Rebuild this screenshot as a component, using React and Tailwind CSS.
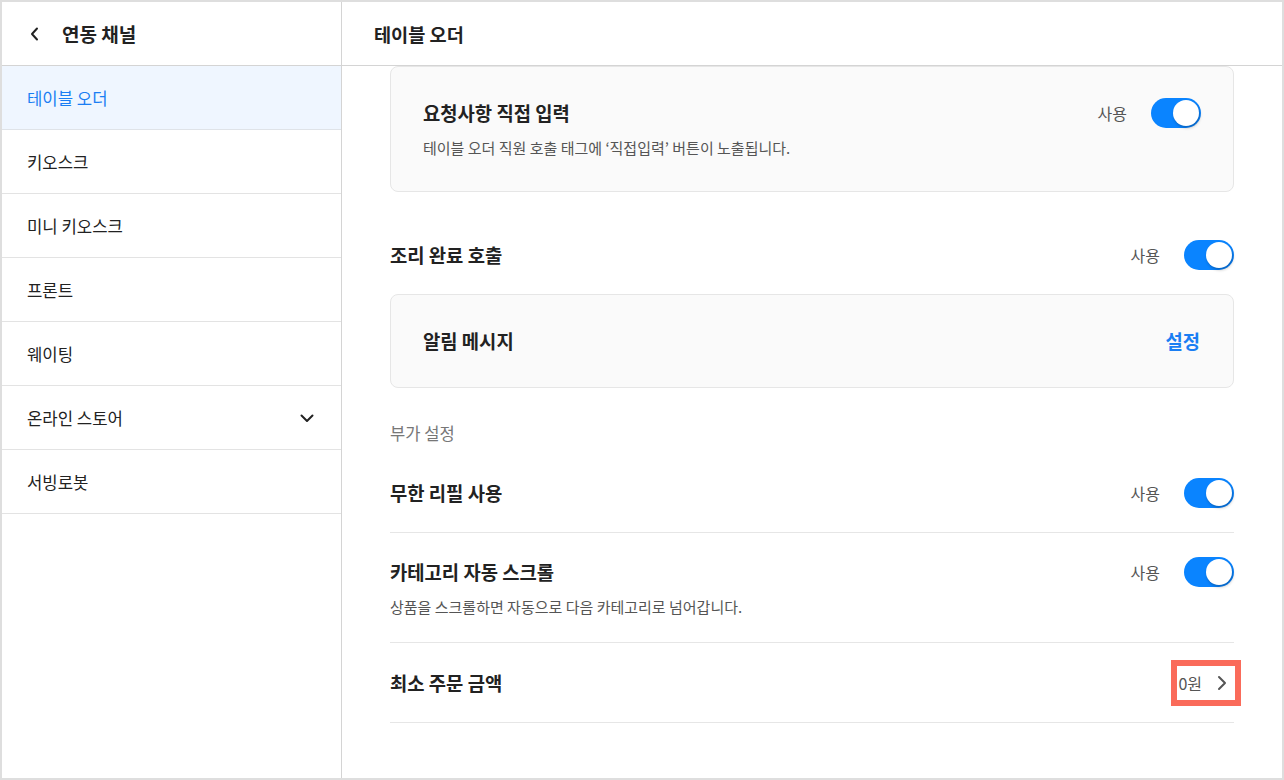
import React from "react";

function Toggle() {
  return (
    <div className="relative w-[50px] h-[30px] rounded-full bg-[#0a84ff] shrink-0">
      <div className="absolute top-[2px] right-[2px] w-[26px] h-[26px] rounded-full bg-white shadow-[1px_2px_3px_rgba(0,0,0,0.25)]" />
    </div>
  );
}

function UseToggle() {
  return (
    <div className="flex items-center gap-6">
      <span className="text-[16px] leading-[24px] text-[#555]">사용</span>
      <Toggle />
    </div>
  );
}

const menu = ["테이블 오더", "키오스크", "미니 키오스크", "프론트", "웨이팅", "온라인 스토어", "서빙로봇"];

export default function App() {
  return (
    <div className="w-[1284px] h-[780px] border-2 border-[#dedede] flex bg-white overflow-hidden font-['Noto_Sans_CJK_KR','Noto_Sans',sans-serif] text-[#222]">
      <aside className="w-[340px] shrink-0 border-r border-[#d4d4d4] flex flex-col">
        <div className="h-[64px] shrink-0 border-b border-[#d4d4d4] flex items-center pl-[28px]">
          <svg width="10" height="14" viewBox="0 0 10 14" fill="none">
            <path d="M7 1.5L2 7l5 5.5" stroke="#222" strokeWidth="2" strokeLinecap="round" strokeLinejoin="round" />
          </svg>
          <span className="ml-[22px] text-[19px] leading-[26px] font-bold">연동 채널</span>
        </div>
        {menu.map((m, i) => (
          <div
            key={m}
            className={
              i === 0
                ? "h-[64px] shrink-0 border-b border-[#dfe3e8] bg-[#eff6ff] flex items-center px-[25px] text-[16.7px] text-[#1a7ef3]"
                : "h-[64px] shrink-0 border-b border-[#e3e3e3] flex items-center justify-between px-[25px] text-[16.7px] text-[#222]"
            }
          >
            <span className="leading-[24px]">{m}</span>
            {m === "온라인 스토어" && (
              <svg width="14" height="10" viewBox="0 0 14 10" fill="none" className="mr-[2px]">
                <path d="M1.5 2.5L7 8l5.5-5.5" stroke="#222" strokeWidth="2" strokeLinecap="round" strokeLinejoin="round" />
              </svg>
            )}
          </div>
        ))}
      </aside>
      <main className="flex-1 min-w-0 flex flex-col">
        <div className="h-[64px] shrink-0 border-b border-[#d4d4d4] flex items-center px-8">
          <span className="text-[18.6px] leading-[26px] font-bold">테이블 오더</span>
        </div>
        <div className="flex-1 overflow-hidden px-12">
          <div className="rounded-lg border border-[#e6e6e6] bg-[#fafafa] px-8 pt-[31px] pb-[33px]">
            <div className="flex items-center justify-between h-[30px]">
              <span className="text-[18.8px] leading-[26px] font-semibold">요청사항 직접 입력</span>
              <UseToggle />
            </div>
            <p className="mt-[10px] text-[15px] leading-[20px] text-[#555]">
              테이블 오더 직원 호출 태그에 ‘직접입력’ 버튼이 노출됩니다.
            </p>
          </div>

          <div className="mt-12 flex items-center justify-between h-[30px]">
            <span className="text-[18.8px] leading-[26px] font-semibold">조리 완료 호출</span>
            <UseToggle />
          </div>

          <div className="mt-6 h-[94px] rounded-lg border border-[#e6e6e6] bg-[#fafafa] pl-8 pr-[33px] flex items-center justify-between">
            <span className="text-[18.8px] leading-[26px] font-semibold">알림 메시지</span>
            <span className="text-[18.8px] leading-[26px] font-semibold text-[#1a7ef3]">설정</span>
          </div>

          <div className="mt-[33px] text-[16.6px] leading-[24px] text-[#777]">부가 설정</div>

          <div className="mt-[9px] py-6 border-b border-[#e6e6e6]">
            <div className="flex items-center justify-between h-[30px]">
              <span className="text-[18.8px] leading-[26px] font-semibold">무한 리필 사용</span>
              <UseToggle />
            </div>
          </div>

          <div className="pt-6 pb-[25px] border-b border-[#e6e6e6]">
            <div className="flex items-center justify-between h-[30px]">
              <span className="text-[18.8px] leading-[26px] font-semibold">카테고리 자동 스크롤</span>
              <UseToggle />
            </div>
            <p className="mt-[10px] text-[15px] leading-[20px] text-[#555]">
              상품을 스크롤하면 자동으로 다음 카테고리로 넘어갑니다.
            </p>
          </div>

          <div className="pt-[25px] pb-6 border-b border-[#e6e6e6]">
            <div className="flex items-center justify-between h-[30px]">
              <span className="text-[18.8px] leading-[26px] font-semibold">최소 주문 금액</span>
              <div className="relative flex items-center h-[30px]">
                <span className="text-[16px] leading-[24px] text-[#555]">0원</span>
                <svg width="20" height="20" viewBox="0 0 20 20" fill="none" className="ml-3">
                  <path d="M5 4l6 6-6 6" stroke="#555" strokeWidth="2" strokeLinecap="round" strokeLinejoin="round" />
                </svg>
                <div className="absolute -top-[8px] -bottom-[8px] -left-[7px] -right-[7px] border-[6px] border-[#fa6b5a]" />
              </div>
            </div>
          </div>
        </div>
      </main>
    </div>
  );
}
